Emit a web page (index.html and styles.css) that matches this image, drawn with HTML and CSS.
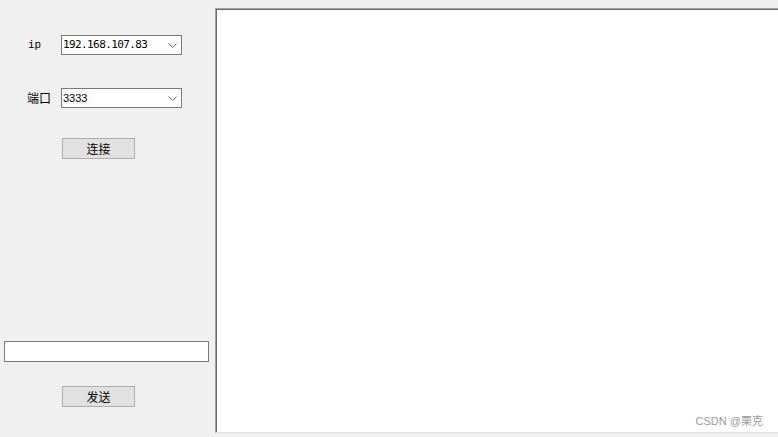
FILE: index.html
```html
<!DOCTYPE html>
<html>
<head>
<meta charset="utf-8">
<link rel="stylesheet" href="styles.css">
</head>
<body>
<div class="window">
  <div class="side">
    <div class="row">
      <span class="label label-ip">ip</span>
      <div class="combo">
        <span class="combo-text ip-text">192.168.107.83</span>
        <svg class="chev" width="9" height="5" viewBox="0 0 9 5"><path d="M0.5 0.5 L4.5 4.5 L8.5 0.5" fill="none" stroke="#6a6a6a" stroke-width="1"/></svg>
      </div>
    </div>
    <div class="row row-port">
      <span class="label label-cjk">端口</span>
      <div class="combo">
        <span class="combo-text port-text">3333</span>
        <svg class="chev" width="9" height="5" viewBox="0 0 9 5"><path d="M0.5 0.5 L4.5 4.5 L8.5 0.5" fill="none" stroke="#6a6a6a" stroke-width="1"/></svg>
      </div>
    </div>
    <button class="btn btn-connect">连接</button>
    <div class="spacer"></div>
    <div class="input"></div>
    <button class="btn btn-send">发送</button>
  </div>
  <div class="panel">
    <span class="watermark">CSDN @栗克</span>
  </div>
</div>
</body>
</html>
```
FILE: styles.css
```css
html, body {
  margin: 0;
  padding: 0;
  background: #f0f0f0;
  overflow: hidden;
}
.window {
  display: flex;
  width: 778px;
  height: 437px;
  background: #f0f0f0;
  font-family: "Noto Sans CJK SC", sans-serif;
  color: #000;
}
.side {
  width: 215px;
  flex: none;
  display: flex;
  flex-direction: column;
  padding-top: 35px;
  padding-bottom: 30px;
  box-sizing: border-box;
}
.row {
  display: flex;
  align-items: center;
  height: 20px;
  padding-left: 27px;
}
.row-port {
  margin-top: 33px;
}
.label {
  width: 34px;
  flex: none;
}
.label-ip {
  font-family: "Liberation Mono", monospace;
  font-size: 11px;
  padding-left: 1px;
  width: 33px;
}
.label-cjk {
  font-size: 12px;
  line-height: 14px;
}
.combo {
  width: 121px;
  height: 20px;
  box-sizing: border-box;
  border: 1px solid #7a7a7a;
  background: #fff;
  display: flex;
  align-items: center;
  padding-left: 1px;
  padding-right: 4px;
}
.combo-text {
  flex: 1;
  line-height: 14px;
}
.ip-text {
  font-family: "DejaVu Sans Mono", monospace;
  font-size: 11px;
  letter-spacing: -0.6px;
}
.port-text {
  font-family: "Liberation Sans", sans-serif;
  font-size: 11px;
}
.chev {
  display: block;
  margin-top: 1px;
}
.btn {
  align-self: flex-start;
  margin-left: 62px;
  width: 73px;
  height: 21px;
  box-sizing: border-box;
  border: 1px solid #adadad;
  background: #e1e1e1;
  font-family: "Noto Sans CJK SC", sans-serif;
  font-size: 12px;
  line-height: 17px;
  padding: 0;
  color: #000;
}
.btn-connect {
  margin-top: 30px;
}
.spacer {
  flex: 1;
}
.input {
  margin-left: 4px;
  width: 205px;
  height: 21px;
  box-sizing: border-box;
  border: 1px solid #7a7a7a;
  background: #fff;
}
.btn-send {
  margin-top: 24px;
}
.panel {
  position: relative;
  flex: 1;
  margin-top: 8px;
  height: 425px;
  margin-right: -4px;
  box-sizing: border-box;
  background: #fff;
  border-top: 1px solid #a0a0a0;
  border-left: 1px solid #a0a0a0;
  border-bottom: 1px solid #e3e3e3;
  box-shadow: inset 1px 1px 0 0 #696969;
}
.watermark {
  position: absolute;
  right: 19px;
  bottom: 3px;
  font-family: "Liberation Sans", "Noto Sans CJK SC", sans-serif;
  font-size: 11px;
  color: #999;
  line-height: 16px;
}
```
